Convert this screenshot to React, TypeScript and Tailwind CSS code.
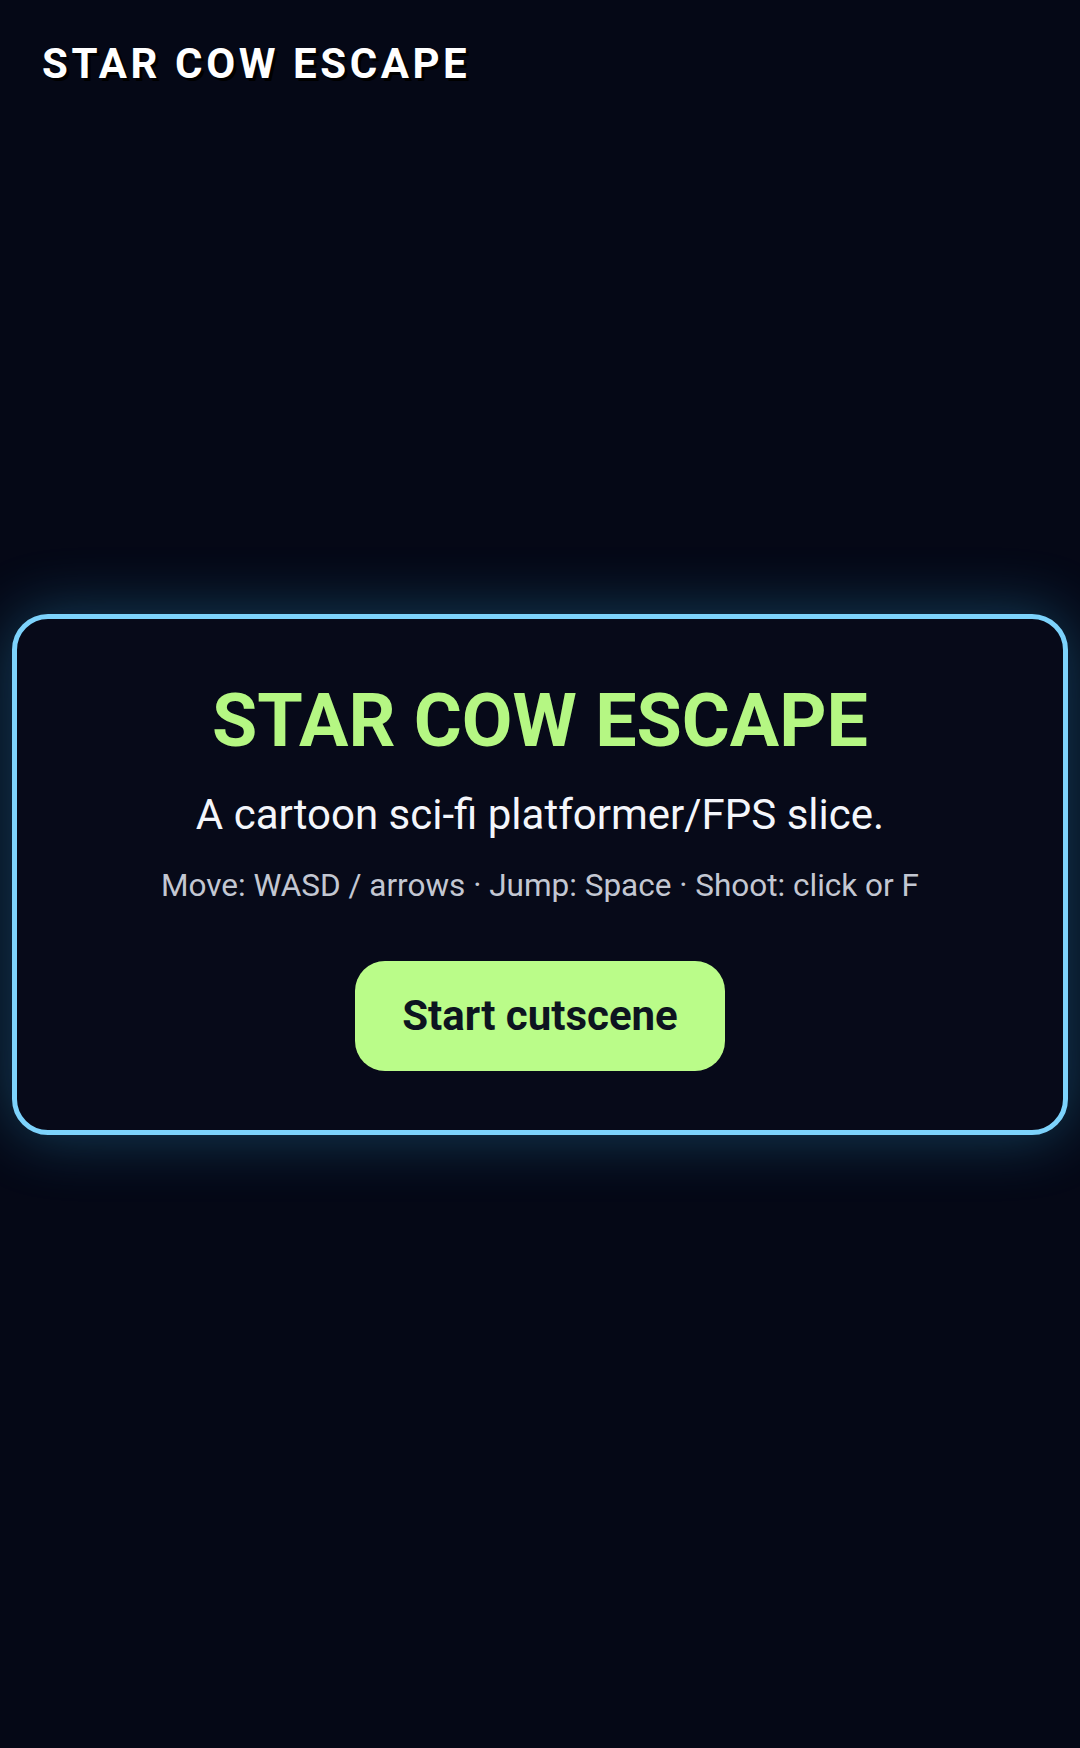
import React from "react";

const font = { fontFamily: "Roboto, 'Noto Sans', Arial, sans-serif" };

function Hud() {
  return (
    <div className="absolute left-[42px] top-[43px] select-none">
      <h1 className="text-[42px] leading-none font-bold tracking-[0.085em] text-white [text-shadow:3px_3px_0_#000]">
        STAR COW ESCAPE
      </h1>
    </div>
  );
}

function StartCard({ onStart }: { onStart: () => void }) {
  return (
    <div className="w-full rounded-[36px] border-[5px] border-[#7dd3fc] bg-[#070a19] px-10 pt-[66px] pb-[59px] flex flex-col items-center text-center shadow-[0_0_64px_rgba(56,189,248,0.32)]">
      <h2 className="text-[73.5px] leading-none font-bold text-[#b5f783]">STAR COW ESCAPE</h2>
      <p className="mt-[36px] text-[42px] leading-none text-[#f4f6fb]">
        A cartoon sci-fi platformer/FPS slice.
      </p>
      <p className="mt-[34px] text-[31.5px] leading-none text-[#c3c7d2]">
        Move: WASD / arrows · Jump: Space · Shoot: click or F
      </p>
      <button
        onClick={onStart}
        className="mt-[59px] h-[110px] w-[370px] rounded-[30px] bg-[#bafc89] text-[42px] font-bold text-[#0d1420] flex items-center justify-center"
      >
        Start cutscene
      </button>
    </div>
  );
}

export default function App() {
  return (
    <div className="relative min-h-screen h-[1748px] bg-[#050816] flex items-center justify-center px-[12px]" style={font}>
      <Hud />
      <StartCard onStart={() => {}} />
    </div>
  );
}
